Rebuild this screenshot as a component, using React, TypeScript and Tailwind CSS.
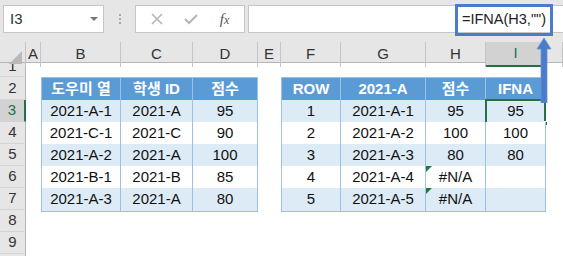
import type { ReactNode } from 'react';

const font = { fontFamily: '"Liberation Sans", "Noto Sans CJK KR", sans-serif' };

const gridCols = 'grid grid-cols-[26px_15px_80px_72px_65px_23px_60px_85px_60px_60px_17px]';
const letters = ['A', 'B', 'C', 'D', 'E', 'F', 'G', 'H', 'I', ''];

const left = [
  ['2021-A-1', '2021-A', '95'],
  ['2021-C-1', '2021-C', '90'],
  ['2021-A-2', '2021-A', '100'],
  ['2021-B-1', '2021-B', '85'],
  ['2021-A-3', '2021-A', '80'],
];

const right = [
  ['1', '2021-A-1', '95', '95'],
  ['2', '2021-A-2', '100', '100'],
  ['3', '2021-A-3', '80', '80'],
  ['4', '2021-A-4', '#N/A', ''],
  ['5', '2021-A-5', '#N/A', ''],
];

function RowHead({ n, active, h }: { n: number | string; active?: boolean; h: string }) {
  return (
    <div
      className={`${h} flex items-center justify-center border-b border-[#d4d4d4] text-[15px] ${
        active
          ? 'bg-[#d2d2d2] text-[#217346] border-r-2 border-r-[#217346]'
          : 'bg-[#e6e6e6] text-[#333] border-r border-r-[#b5b5b5]'
      }`}
    >
      {n}
    </div>
  );
}

function Cell({
  children,
  band,
  first,
  head,
  top,
  className = '',
}: {
  children?: ReactNode;
  band?: boolean;
  first?: boolean;
  head?: boolean;
  top?: boolean;
  className?: string;
}) {
  const bg = head ? 'bg-[#5b9bd5] text-white font-bold' : band ? 'bg-[#ddebf7] text-[#111]' : 'bg-white text-[#111]';
  return (
    <div
      className={`relative flex items-center justify-center text-[15px] border-r border-b border-[#9bc2e6] ${
        first ? 'border-l' : ''
      } ${top ? 'border-t' : ''} ${bg} ${className}`}
    >
      {children}
    </div>
  );
}

function ErrFlag() {
  return (
    <span className="absolute left-0 top-0 w-0 h-0 border-t-[6px] border-t-[#1e7b3c] border-r-[6px] border-r-transparent" />
  );
}

export default function App() {
  return (
    <div className="relative w-[563px] h-[256px] overflow-hidden bg-white" style={font}>
      {/* formula bar */}
      <div className="h-[42px] bg-[#e6e6e6] flex items-start pt-[5px] pl-[3px]">
        <div className="w-[101px] h-[28px] bg-white border border-[#c6c6c6] flex items-center justify-between pl-[6px] pr-[5px]">
          <span className="text-[15px] text-[#333]">I3</span>
          <span className="w-0 h-0 border-l-[4px] border-r-[4px] border-t-[4px] border-l-transparent border-r-transparent border-t-[#777]" />
        </div>
        <div className="w-[31px] h-[28px] flex flex-col items-center justify-center gap-[2px]">
          <span className="w-[2px] h-[2px] bg-[#a6a6a6]" />
          <span className="w-[2px] h-[2px] bg-[#a6a6a6]" />
          <span className="w-[2px] h-[2px] bg-[#a6a6a6]" />
        </div>
        <div className="w-[110px] h-[28px] bg-white border border-[#c6c6c6] flex items-center justify-around px-[4px]">
          <svg width="12" height="12" viewBox="0 0 12 12">
            <path d="M1 1 L11 11 M11 1 L1 11" stroke="#b4b4b4" strokeWidth="1.5" />
          </svg>
          <svg width="14" height="12" viewBox="0 0 14 12">
            <path d="M1 6 L5 10 L13 2" stroke="#b4b4b4" strokeWidth="2" fill="none" />
          </svg>
          <span className="text-[15px] italic text-[#555]" style={{ fontFamily: '"Liberation Serif", serif' }}>
            f<span className="text-[12px]">x</span>
          </span>
        </div>
        <div className="ml-[3px] flex-1 h-[28px] bg-white border border-[#c6c6c6] border-r-0" />
      </div>

      {/* column headers */}
      <div className={`${gridCols} h-[21px] bg-[#e6e6e6] border-b border-[#b5b5b5]`}>
        <div className="relative border-r border-[#c6c6c6]">
          <span className="absolute right-[3px] bottom-[3px] w-0 h-0 border-l-[13px] border-l-transparent border-b-[13px] border-b-[#b9b9b9]" />
        </div>
        {letters.map((l, i) =>
          l === 'I' ? (
            <div
              key={i}
              className="flex items-center justify-center text-[15px] text-[#217346] bg-[#d2d2d2] border-r border-[#c6c6c6] border-b-2 border-b-[#217346]"
            >
              {l}
            </div>
          ) : (
            <div key={i} className="flex items-center justify-center text-[15px] text-[#333] border-r border-[#c6c6c6]">
              {l}
            </div>
          )
        )}
      </div>

      {/* row 1 (partly scrolled) */}
      <div className={`${gridCols} h-[14px]`}>
        <div className="h-[14px] overflow-hidden flex items-end justify-center bg-[#e6e6e6] border-r border-b border-[#d4d4d4] border-r-[#b5b5b5]">
          <span className="text-[15px] leading-[20px] text-[#333]">1</span>
        </div>
      </div>

      {/* row 2: table headers */}
      <div className={`${gridCols} h-[23px]`}>
        <RowHead n={2} h="h-[23px]" />
        <div />
        <Cell head first top>도우미 열</Cell>
        <Cell head top>학생 ID</Cell>
        <Cell head top>점수</Cell>
        <div />
        <Cell head first top>ROW</Cell>
        <Cell head top>2021-A</Cell>
        <Cell head top>점수</Cell>
        <Cell head top>IFNA</Cell>
        <div />
      </div>

      {/* rows 3-7 */}
      {left.map((r, i) => {
        const band = i % 2 === 0;
        const q = right[i];
        return (
          <div key={i} className={`${gridCols} h-[22px]`}>
            <RowHead n={i + 3} active={i === 0} h="h-[22px]" />
            <div />
            <Cell band={band} first>{r[0]}</Cell>
            <Cell band={band}>{r[1]}</Cell>
            <Cell band={band}>{r[2]}</Cell>
            <div />
            <Cell band={band} first>{q[0]}</Cell>
            <Cell band={band}>{q[1]}</Cell>
            <Cell band={band}>
              {q[2] === '#N/A' && <ErrFlag />}
              {q[2]}
            </Cell>
            <Cell band={band}>
              {q[3]}
              {i === 0 && (
                <>
                  <span className="absolute -left-[1px] -top-[1px] -right-[1px] -bottom-[1px] border-2 border-[#217346]" />
                  <span className="absolute -right-[3px] -bottom-[3px] w-[5px] h-[5px] bg-[#217346] border border-white" />
                </>
              )}
            </Cell>
            <div />
          </div>
        );
      })}

      {/* rows 8-10 */}
      {[8, 9, 10].map((n) => (
        <div key={n} className={`${gridCols} h-[22px]`}>
          <RowHead n={n} h="h-[22px]" />
        </div>
      ))}

      {/* callout box around the formula */}
      <div className="absolute left-[455px] top-[4px] w-[98px] h-[32px] border-[3px] border-[#4a7cc9] flex items-center pl-[4px]">
        <span className="text-[14.5px] text-[#222]">=IFNA(H3,"")</span>
      </div>
      <svg className="absolute left-[536px] top-[37px]" width="16" height="66" viewBox="0 0 16 66">
        <path d="M8 1 L15 12 L11 12 L11 66 L5 66 L5 12 L1 12 Z" fill="#4a7cc9" stroke="#6a93d6" strokeWidth="0.8" />
      </svg>
    </div>
  );
}
